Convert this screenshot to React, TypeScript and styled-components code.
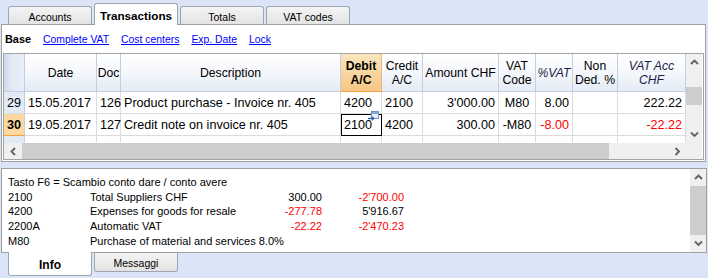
import React from "react";
import styled, { createGlobalStyle, css } from "styled-components";

const Global = createGlobalStyle`
  html, body { margin: 0; padding: 0; background: #dbe5f7; }
  body { font-family: "Liberation Sans", Arial, sans-serif; }
`;

const Root = styled.div`
  width: 708px;
  height: 278px;
  background: #dbe5f7;
  overflow: hidden;
  font-family: "Liberation Sans", Arial, sans-serif;
  color: #000;
`;

const TabStrip = styled.div<{ $bottom?: boolean }>`
  display: flex;
  gap: 2px;
  padding-left: 8px;
  position: relative;
  z-index: 1;
  ${(p) =>
    p.$bottom
      ? css`
          align-items: flex-start;
          margin-top: -1px;
        `
      : css`
          align-items: flex-end;
          height: 25px;
          margin-bottom: -1px;
        `}
`;

const Tab = styled.div<{ $active?: boolean; $bottom?: boolean }>`
  width: 84px;
  box-sizing: border-box;
  display: flex;
  align-items: center;
  justify-content: center;
  border: 1px solid #9ea6b3;
  font-size: 10.5px;
  color: #000;
  ${(p) =>
    p.$bottom
      ? css`
          border-top: none;
          border-radius: 0 0 3px 3px;
        `
      : css`
          border-bottom: none;
          border-radius: 3px 3px 0 0;
        `}
  ${(p) =>
    p.$active
      ? css`
          background: #fff;
          font-weight: bold;
          font-size: ${p.$bottom ? "12px" : "11.7px"};
          height: ${p.$bottom ? "24px" : "22px"};
          padding-top: ${p.$bottom ? "2px" : "2px"};
        `
      : css`
          background: linear-gradient(#f4f4f4, #e3e3e3);
          height: 18px;
          ${p.$bottom
            ? css`
                margin-top: 1px;
                height: 19px;
                padding-top: 1px;
              `
            : css`
                margin-bottom: 1px;
                padding-top: 2px;
              `}
        `}
`;

const MainPanel = styled.div`
  margin-left: 1px;
  width: 705px;
  height: 138px;
  box-sizing: border-box;
  border: 1px solid #a0a0a0;
  background: #fff;
  display: flex;
  flex-direction: column;
`;

const LinkBar = styled.div`
  height: 28px;
  display: flex;
  align-items: center;
  gap: 12px;
  padding-left: 3px;
  font-size: 10.4px;
`;

const ViewName = styled.span`
  font-weight: bold;
  font-size: 10.9px;
`;

const ViewLink = styled.a`
  color: #0000ff;
  text-decoration: underline;
  cursor: pointer;
`;

const GridFrame = styled.div`
  margin: 0 1px;
  height: 107px;
  box-sizing: border-box;
  border: 1px solid #a3a3a3;
  display: flex;
  flex-direction: column;
`;

const GridMain = styled.div`
  display: flex;
  height: 89px;
`;

const Table = styled.div`
  width: 682px;
  display: grid;
  grid-template-columns: 21px 72px 24px 220px 41px 41px 76px 37px 37px 45px 68px;
  grid-template-rows: 38px 22px 22px 7px;
  overflow: hidden;
`;

const HeadCell = styled.div<{ $hot?: boolean; $italic?: boolean; $corner?: boolean }>`
  box-sizing: border-box;
  display: flex;
  align-items: center;
  justify-content: center;
  text-align: center;
  font-size: 12.2px;
  line-height: 14px;
  border-right: 1px solid #c3cfe0;
  border-bottom: 1px solid #c3cfe0;
  background: linear-gradient(#ffffff, #f3f6fb 55%, #e4ebf5);
  color: #000;
  ${(p) =>
    p.$italic &&
    css`
      font-style: italic;
      color: #1d1d48;
    `}
  ${(p) =>
    p.$hot &&
    css`
      font-weight: bold;
      background: linear-gradient(#fbe5bd, #f5c784);
      border-bottom: 1px solid #f0a045;
      border-right: 1px solid #e9b878;
    `}
  ${(p) =>
    p.$corner &&
    css`
      background: linear-gradient(90deg, #ccd9ec, #e2eaf6 40%, #e8eef8);
    `}
`;

const RowHead = styled.div<{ $current?: boolean; $stub?: boolean }>`
  box-sizing: border-box;
  display: flex;
  align-items: center;
  justify-content: flex-end;
  padding-right: 3px;
  font-size: 12.6px;
  border-right: 1px solid #c3cfe0;
  background: #e2eaf6;
  border-bottom: 1px solid ${(p) => (p.$stub ? "transparent" : "#d6deea")};
  ${(p) =>
    p.$current &&
    css`
      background: #fdd89f;
      border-bottom: 1px solid #f3a24a;
      font-weight: bold;
    `}
`;

type Align = "left" | "right" | "center";

const Cell = styled.div<{ $align?: Align; $red?: boolean; $selected?: boolean; $stub?: boolean }>`
  position: relative;
  box-sizing: border-box;
  display: flex;
  align-items: center;
  padding: 0 3px;
  font-size: 12.6px;
  white-space: nowrap;
  border-right: 1px solid #dcdcdc;
  border-bottom: 1px solid ${(p) => (p.$stub ? "transparent" : "#dcdcdc")};
  justify-content: ${(p) =>
    p.$align === "right" ? "flex-end" : p.$align === "center" ? "center" : "flex-start"};
  color: ${(p) => (p.$red ? "#ff0000" : "#000")};
  ${(p) =>
    p.$selected &&
    css`
      border: 1px solid #000;
      padding-left: 2px;
    `}
`;

const CellBadge = styled.span`
  position: absolute;
  top: -4px;
  right: 2px;
  width: 11px;
  height: 11px;
  display: block;
`;

const VScroll = styled.div`
  width: 16px;
  display: flex;
  flex-direction: column;
  background: #f0f0f0;
`;

const ScrollButton = styled.div`
  width: 16px;
  height: 17px;
  flex: none;
  display: flex;
  align-items: center;
  justify-content: center;
  background: #f0f0f0;
`;

const HScrollButton = styled(ScrollButton)`
  width: 18px;
  height: 16px;
`;

const Track = styled.div<{ $pad?: number }>`
  flex: 1;
  display: flex;
  flex-direction: column;
  background: #f0f0f0;
  padding-top: ${(p) => p.$pad ?? 0}px;
`;

const VThumb = styled.div<{ $h: number }>`
  width: 16px;
  background: #cdcdcd;
  height: ${(p) => p.$h}px;
  flex: none;
`;

const HScrollRow = styled.div`
  display: flex;
  height: 16px;
`;

const HScroll = styled.div`
  width: 682px;
  display: flex;
  background: #f0f0f0;
`;

const HThumb = styled.div`
  width: 587px;
  background: #cdcdcd;
`;

const HTrackRest = styled.div`
  flex: 1;
`;

const Corner = styled.div`
  width: 16px;
  background: #f0f0f0;
`;

const InfoPanel = styled.div`
  margin: 6px 0 0 1px;
  width: 706px;
  height: 85px;
  box-sizing: border-box;
  border: 1px solid #a0a0a0;
  background: #fff;
  display: flex;
`;

const InfoContent = styled.div`
  flex: 1;
  padding: 6px 0 0 6px;
  display: grid;
  grid-template-columns: 82px 170px 62px 82px;
  grid-auto-rows: 14.7px;
  align-content: start;
  font-size: 11px;
  line-height: 14.7px;
  white-space: nowrap;
`;

const InfoText = styled.div<{ $span?: string; $align?: Align; $red?: boolean }>`
  grid-column: ${(p) => p.$span ?? "auto"};
  text-align: ${(p) => p.$align ?? "left"};
  color: ${(p) => (p.$red ? "#ff0000" : "#000")};
`;

const InfoScroll = styled.div`
  width: 16px;
  display: flex;
  flex-direction: column;
  background: #f0f0f0;
`;

const Chevron = ({ dir }: { dir: "up" | "down" | "left" | "right" }) => {
  const d =
    dir === "up"
      ? "M1 5 L4.5 1.5 L8 5"
      : dir === "down"
      ? "M1 1.5 L4.5 5 L8 1.5"
      : dir === "left"
      ? "M5 1 L1.5 4.5 L5 8"
      : "M1.5 1 L5 4.5 L1.5 8";
  const w = dir === "up" || dir === "down" ? 9 : 7;
  const h = dir === "up" || dir === "down" ? 7 : 9;
  return (
    <svg width={w} height={h} viewBox={`0 0 ${w} ${h}`}>
      <path d={d} fill="none" stroke="#606060" strokeWidth="1.8" />
    </svg>
  );
};

const EditIcon = () => (
  <svg width="11" height="11" viewBox="0 0 11 11">
    <rect x="3.5" y="0.5" width="7" height="7" fill="#e6eef9" stroke="#7194c8" />
    <rect x="4" y="1" width="6" height="2" fill="#86a8da" />
    <path d="M0 7.5 H5.5" stroke="#2d5fb3" strokeWidth="1.4" />
    <path d="M3.8 5.6 L5.8 7.5 L3.8 9.4" fill="none" stroke="#2d5fb3" strokeWidth="1.2" />
  </svg>
);

type Col = {
  key: string;
  label: string[];
  align: Align;
  hot?: boolean;
  italic?: boolean;
};

const columns: Col[] = [
  { key: "date", label: ["Date"], align: "left" },
  { key: "doc", label: ["Doc"], align: "left" },
  { key: "desc", label: ["Description"], align: "left" },
  { key: "debit", label: ["Debit", "A/C"], align: "left", hot: true },
  { key: "credit", label: ["Credit", "A/C"], align: "left" },
  { key: "amount", label: ["Amount CHF"], align: "right" },
  { key: "vat", label: ["VAT", "Code"], align: "center" },
  { key: "pvat", label: ["%VAT"], align: "right", italic: true },
  { key: "nonded", label: ["Non", "Ded. %"], align: "right" },
  { key: "vatacc", label: ["VAT Acc", "CHF"], align: "right", italic: true },
];

type Row = { n: string; current?: boolean; values: Record<string, string>; red: string[] };

const rows: Row[] = [
  {
    n: "29",
    values: {
      date: "15.05.2017",
      doc: "126",
      desc: "Product purchase - Invoice nr. 405",
      debit: "4200",
      credit: "2100",
      amount: "3'000.00",
      vat: "M80",
      pvat: "8.00",
      nonded: "",
      vatacc: "222.22",
    },
    red: [],
  },
  {
    n: "30",
    current: true,
    values: {
      date: "19.05.2017",
      doc: "127",
      desc: "Credit note on invoice nr. 405",
      debit: "2100",
      credit: "4200",
      amount: "300.00",
      vat: "-M80",
      pvat: "-8.00",
      nonded: "",
      vatacc: "-22.22",
    },
    red: ["pvat", "vatacc"],
  },
];

const info = [
  { a: "2100", b: "Total Suppliers CHF", c: "300.00", d: "-2'700.00", cr: false, dr: true },
  { a: "4200", b: "Expenses for goods for resale", c: "-277.78", d: "5'916.67", cr: true, dr: false },
  { a: "2200A", b: "Automatic VAT", c: "-22.22", d: "-2'470.23", cr: true, dr: true },
];

export default function App() {
  return (
    <Root>
      <Global />
      <TabStrip>
        <Tab>Accounts</Tab>
        <Tab $active>Transactions</Tab>
        <Tab>Totals</Tab>
        <Tab>VAT codes</Tab>
      </TabStrip>
      <MainPanel>
        <LinkBar>
          <ViewName>Base</ViewName>
          <ViewLink>Complete VAT</ViewLink>
          <ViewLink>Cost centers</ViewLink>
          <ViewLink>Exp. Date</ViewLink>
          <ViewLink>Lock</ViewLink>
        </LinkBar>
        <GridFrame>
          <GridMain>
            <Table>
              <HeadCell $corner />
              {columns.map((c) => (
                <HeadCell key={c.key} $hot={c.hot} $italic={c.italic}>
                  <span>
                    {c.label.map((l, i) => (
                      <React.Fragment key={i}>
                        {i > 0 && <br />}
                        {l}
                      </React.Fragment>
                    ))}
                  </span>
                </HeadCell>
              ))}
              {rows.map((r) => (
                <React.Fragment key={r.n}>
                  <RowHead $current={r.current}>{r.n}</RowHead>
                  {columns.map((c) => {
                    const selected = r.current && c.key === "debit";
                    return (
                      <Cell
                        key={c.key}
                        $align={c.align}
                        $red={r.red.includes(c.key)}
                        $selected={selected}
                      >
                        {r.values[c.key]}
                        {selected && (
                          <CellBadge>
                            <EditIcon />
                          </CellBadge>
                        )}
                      </Cell>
                    );
                  })}
                </React.Fragment>
              ))}
              <RowHead $stub />
              {columns.map((c) => (
                <Cell key={c.key} $stub />
              ))}
            </Table>
            <VScroll>
              <ScrollButton>
                <Chevron dir="up" />
              </ScrollButton>
              <Track $pad={16}>
                <VThumb $h={18} />
              </Track>
              <ScrollButton>
                <Chevron dir="down" />
              </ScrollButton>
            </VScroll>
          </GridMain>
          <HScrollRow>
            <HScroll>
              <HScrollButton>
                <Chevron dir="left" />
              </HScrollButton>
              <HThumb />
              <HTrackRest />
              <HScrollButton>
                <Chevron dir="right" />
              </HScrollButton>
            </HScroll>
            <Corner />
          </HScrollRow>
        </GridFrame>
      </MainPanel>
      <InfoPanel>
        <InfoContent>
          <InfoText $span="1 / -1">Tasto F6 = Scambio conto dare / conto avere</InfoText>
          {info.map((r) => (
            <React.Fragment key={r.a}>
              <InfoText>{r.a}</InfoText>
              <InfoText>{r.b}</InfoText>
              <InfoText $align="right" $red={r.cr}>
                {r.c}
              </InfoText>
              <InfoText $align="right" $red={r.dr}>
                {r.d}
              </InfoText>
            </React.Fragment>
          ))}
          <InfoText>M80</InfoText>
          <InfoText $span="2 / -1">Purchase of material and services 8.0%</InfoText>
        </InfoContent>
        <InfoScroll>
          <ScrollButton>
            <Chevron dir="up" />
          </ScrollButton>
          <Track>
            <VThumb $h={49} />
          </Track>
          <ScrollButton>
            <Chevron dir="down" />
          </ScrollButton>
        </InfoScroll>
      </InfoPanel>
      <TabStrip $bottom>
        <Tab $bottom $active>
          Info
        </Tab>
        <Tab $bottom>Messaggi</Tab>
      </TabStrip>
    </Root>
  );
}
